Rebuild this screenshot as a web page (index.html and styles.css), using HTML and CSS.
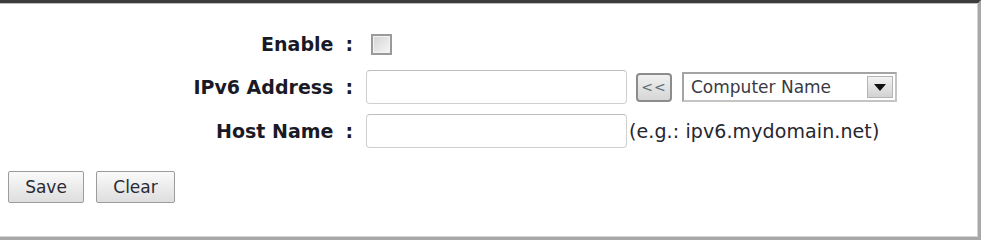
FILE: index.html
```html
<!DOCTYPE html>
<html>
<head>
<meta charset="utf-8">
<link rel="stylesheet" href="styles.css">
</head>
<body>
<div class="panel">
  <div class="form">
    <div class="row row-first">
      <label class="label" for="en">Enable<span class="colon">:</span></label>
      <div class="field"><input type="checkbox" id="en" class="check"></div>
    </div>
    <div class="row">
      <label class="label" for="addr">IPv6 Address<span class="colon">:</span></label>
      <div class="field">
        <input type="text" id="addr" class="text">
        <button class="mini" type="button">&lt;&lt;</button>
        <div class="select"><span class="value">Computer Name</span><span class="arrow"><svg width="12" height="7" viewBox="0 0 12 7"><path d="M0 0H12L6 7Z" fill="#111"/></svg></span></div>
      </div>
    </div>
    <div class="row">
      <label class="label" for="host">Host Name<span class="colon">:</span></label>
      <div class="field">
        <input type="text" id="host" class="text">
        <span class="hint">(e.g.: ipv6.mydomain.net)</span>
      </div>
    </div>
  </div>
  <div class="actions">
    <button class="btn btn-save" type="button">Save</button>
    <button class="btn btn-clear" type="button">Clear</button>
  </div>
</div>
</body>
</html>
```
FILE: styles.css
```css
html, body {
  margin: 0;
  padding: 0;
  background: #fff;
}
body {
  font-family: "DejaVu Sans", Verdana, sans-serif;
  color: #1c1c24;
}
.panel {
  width: 978px;
  height: 234px;
  border-top: 3px solid #3c3c3c;
  border-right: 3px solid #a8a8a8;
  border-bottom: 3px solid #a8a8a8;
  box-shadow: inset -1px -1px 0 #d4d4d4, inset 0 1px 0 #bdbdbd;
  display: flex;
  flex-direction: column;
}
.form {
  padding-top: 20px;
  display: flex;
  flex-direction: column;
}
.row {
  display: flex;
  align-items: center;
  height: 44px;
}
.row-first {
  height: 42px;
}
.label {
  width: 353px;
  text-align: right;
  font-weight: bold;
  font-size: 19px;
  white-space: pre;
  color: #1a1a26;
}
.colon {
  margin-left: 12px;
}
.field {
  margin-left: 13px;
  display: flex;
  align-items: center;
}
.check {
  appearance: none;
  -webkit-appearance: none;
  margin: 0 0 0 5px;
  width: 21px;
  height: 21px;
  box-sizing: border-box;
  border: 2px solid #9a9a9a;
  background: linear-gradient(135deg, #d4d4d4, #f6f6f6);
  box-shadow: inset 0 0 0 1px #f2f2f2;
}
.text {
  margin: 0;
  width: 261px;
  height: 34px;
  box-sizing: border-box;
  border: 1px solid #cfcfcf;
  border-top-color: #bdbdbd;
  border-radius: 4px;
  background: #fff;
  font-family: inherit;
  font-size: 17px;
}
.mini {
  margin: 0 0 0 9px;
  width: 36px;
  height: 29px;
  box-sizing: border-box;
  padding: 0;
  border: 2px solid #8c8c8c;
  border-radius: 4px;
  background: linear-gradient(#f0f0f0, #d6d6d6);
  color: #5a6a74;
  font-family: inherit;
  font-size: 14px;
  letter-spacing: 1px;
}
.select {
  margin-left: 10px;
  width: 215px;
  height: 30px;
  box-sizing: border-box;
  border: 2px solid #a4a4a4;
  border-right-color: #c4c4c4;
  border-bottom-color: #c4c4c4;
  display: flex;
  align-items: center;
  background: #fff;
}
.value {
  flex: 1;
  padding-left: 7px;
  font-size: 17px;
  color: #3a3a44;
}
.arrow {
  width: 26px;
  height: 22px;
  margin-right: 2px;
  box-sizing: border-box;
  border: 1px solid #b4b4b4;
  background: linear-gradient(#f2f2f2, #d2d2d2);
  display: flex;
  align-items: center;
  justify-content: center;
}
.hint {
  margin-left: 2px;
  font-size: 19px;
  letter-spacing: 0.1px;
  color: #262630;
}
.actions {
  margin-top: 18px;
  padding-left: 8px;
  display: flex;
  gap: 12px;
}
.btn {
  height: 32px;
  box-sizing: border-box;
  border: 1px solid #9c9c9c;
  border-radius: 2px;
  background: linear-gradient(#fafafa, #dedede);
  font-family: inherit;
  font-size: 17px;
  color: #2a2a34;
  padding: 0;
}
.btn-save { width: 76px; }
.btn-clear { width: 79px; }
```
